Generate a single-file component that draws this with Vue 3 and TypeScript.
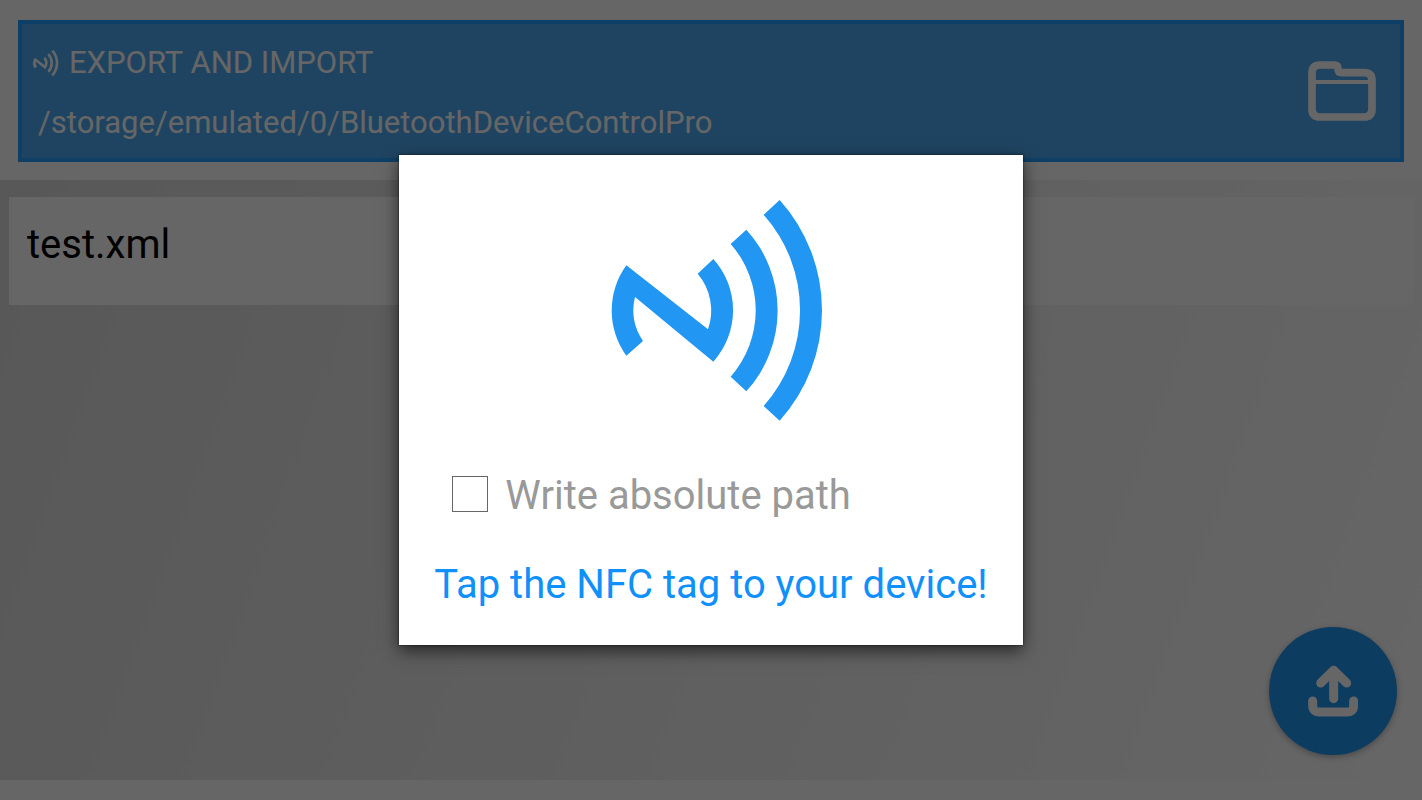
<script setup lang="ts">
import { ref } from 'vue'

const folder = ref<string>('/storage/emulated/0/BluetoothDeviceControlPro')
const files = ref<string[]>(['test.xml'])
const absolutePath = ref<boolean>(false)

const nfcShapes: string[] = [
  'M569 60A495 495 0 0 1 569 722L521 678A432 432 0 0 0 521 104Z',
  'M469 149A360 360 0 0 1 469 634L422 590A301 301 0 0 0 422 192Z',
  'M370 237A230 230 0 0 1 370 545L135 351A165 165 0 0 0 159 483L109 527A231 231 0 0 1 109 256L354 448A171 171 0 0 0 323 281Z',
]
</script>

<template>
  <div class="app">
    <header class="top">
      <div class="panel">
        <div class="info">
          <h1 class="title">
            <svg class="title-icon" viewBox="-36 -9 798 798" aria-hidden="true">
              <path v-for="d in nfcShapes" :key="d" :d="d" fill="currentColor" />
            </svg>
            <span>EXPORT AND IMPORT</span>
          </h1>
          <p class="path">{{ folder }}</p>
        </div>
        <button class="folder" type="button" aria-label="Choose folder">
          <svg viewBox="0 0 204 180" aria-hidden="true">
            <path
              d="M12 36Q12 12 36 12H79Q90 12 90 23Q90 35 102 35H168Q192 35 192 59V144Q192 168 168 168H36Q12 168 12 144Z"
              fill="none" stroke="currentColor" stroke-width="23" stroke-linejoin="round"
            />
            <path d="M20 63H184" fill="none" stroke="currentColor" stroke-width="12" />
          </svg>
        </button>
      </div>
    </header>

    <main class="content">
      <ul class="files">
        <li v-for="file in files" :key="file" class="file">{{ file }}</li>
      </ul>
    </main>
    <footer class="bottom"></footer>

    <button class="fab" type="button" aria-label="Export">
      <svg viewBox="0 0 150 154" aria-hidden="true">
        <g fill="none" stroke="currentColor" stroke-width="27" stroke-linecap="round" stroke-linejoin="round">
          <path d="M77 100V15M38 53L77 15L116 53" />
          <path d="M14 107V120Q14 140 34 140H117Q137 140 137 120V107" />
        </g>
      </svg>
    </button>

    <div class="backdrop">
      <dialog class="dialog" open aria-labelledby="nfc-message">
        <svg class="nfc" viewBox="-36 -9 798 798" aria-hidden="true">
          <path v-for="d in nfcShapes" :key="d" :d="d" fill="currentColor" />
        </svg>
        <label class="option" for="absolute-path">
          <input id="absolute-path" v-model="absolutePath" class="check" type="checkbox" />
          <span>Write absolute path</span>
        </label>
        <p id="nfc-message" class="message">Tap the NFC tag to your device!</p>
      </dialog>
    </div>
  </div>
</template>

<style>
body {
  margin: 0;
}
</style>

<style scoped>
.app {
  position: relative;
  display: flex;
  flex-direction: column;
  min-height: 100vh;
  background: #ffffff;
  font-family: Roboto, "Liberation Sans", sans-serif;
}

.top {
  padding: 20px 18px 18px;
}

.panel {
  display: flex;
  align-items: center;
  justify-content: space-between;
  box-sizing: border-box;
  min-height: 142px;
  padding: 0 24px 0 7px;
  border: 4px solid #239eff;
  background: #4eaaf3;
  color: #ffffff;
}

.info {
  display: flex;
  flex-direction: column;
  gap: 20px;
  padding-top: 4px;
}

.title {
  display: flex;
  align-items: center;
  gap: 8px;
  margin: 0;
  font-size: 31px;
  font-weight: 400;
  line-height: 40px;
}

.title-icon {
  width: 32px;
  height: 32px;
}

.path {
  margin: 0;
  padding-left: 9px;
  font-size: 31px;
  line-height: 40px;
}

.folder {
  display: flex;
  padding: 0;
  border: 0;
  background: none;
  color: inherit;
}

.folder svg {
  width: 68px;
  height: 60px;
}

.content {
  flex: 1;
  background: linear-gradient(110deg, #dcdcdc 0%, #ffffff 100%);
}

.files {
  margin: 0;
  padding: 17px 9px;
  list-style: none;
}

.file {
  box-sizing: border-box;
  min-height: 108px;
  padding: 24px 18px;
  background: #ffffff;
  color: #000000;
  font-size: 40px;
  line-height: 48px;
}

.bottom {
  height: 20px;
}

.fab {
  position: absolute;
  right: 25px;
  bottom: 45px;
  display: flex;
  align-items: center;
  justify-content: center;
  width: 128px;
  height: 128px;
  padding: 0;
  border: 0;
  border-radius: 50%;
  background: #2196f3;
  color: #ffffff;
  box-shadow: 0 2px 6px rgba(0, 0, 0, 0.3);
}

.fab svg {
  width: 50px;
  height: 52px;
}

.backdrop {
  position: absolute;
  inset: 0;
  display: flex;
  align-items: center;
  justify-content: center;
  background: rgba(0, 0, 0, 0.6);
}

.dialog {
  position: static;
  display: flex;
  flex-direction: column;
  align-items: center;
  margin: 0;
  padding: 22px 35px 36px;
  border: 0;
  background: #ffffff;
  box-shadow: 0 0 2px rgba(0, 0, 0, 0.7), 0 6px 16px rgba(0, 0, 0, 0.6);
}

.nfc {
  width: 266px;
  height: 266px;
  color: #2196f3;
}

.option {
  display: flex;
  align-items: center;
  align-self: flex-start;
  gap: 17px;
  margin: 29px 0 0 18px;
  color: #999999;
  font-size: 40px;
  line-height: 48px;
}

.check {
  appearance: none;
  width: 36px;
  height: 36px;
  margin: 0 0 5px;
  border: 1px solid #666666;
  background: #ffffff;
}

.check:checked {
  background: #2196f3;
}

.message {
  margin: 41px 0 0;
  color: #0f90fa;
  font-size: 40px;
  line-height: 48px;
  white-space: nowrap;
}
</style>
